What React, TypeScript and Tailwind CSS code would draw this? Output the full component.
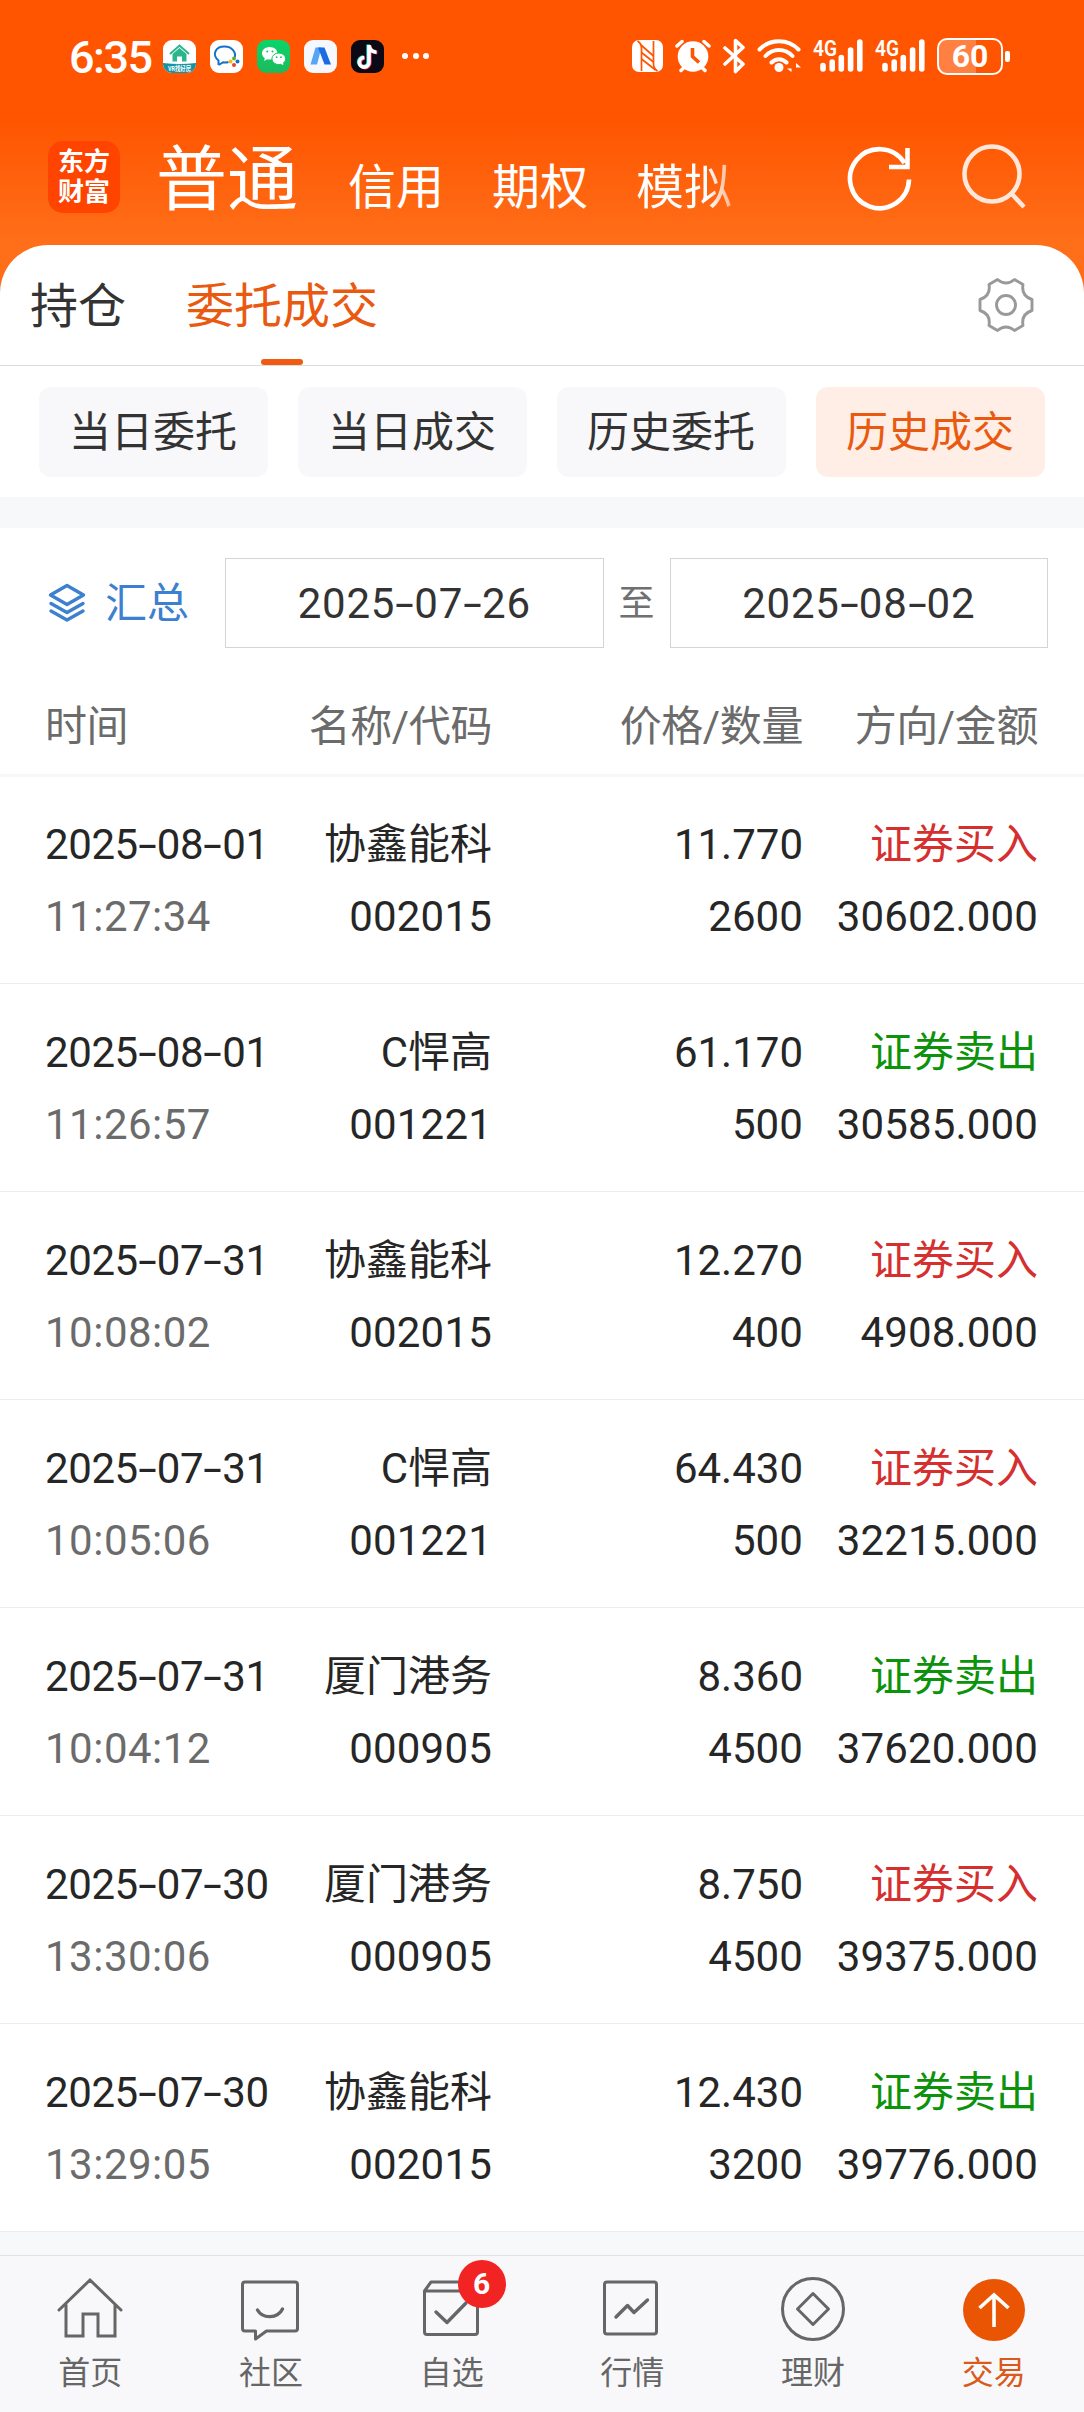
import type { ReactNode } from "react";

interface Trade {
  date: string;
  time: string;
  name: string;
  code: string;
  price: string;
  quantity: string;
  side: "buy" | "sell";
  amount: string;
}

const trades: Trade[] = [
  { date: "2025-08-01", time: "11:27:34", name: "协鑫能科", code: "002015", price: "11.770", quantity: "2600", side: "buy", amount: "30602.000" },
  { date: "2025-08-01", time: "11:26:57", name: "C悍高", code: "001221", price: "61.170", quantity: "500", side: "sell", amount: "30585.000" },
  { date: "2025-07-31", time: "10:08:02", name: "协鑫能科", code: "002015", price: "12.270", quantity: "400", side: "buy", amount: "4908.000" },
  { date: "2025-07-31", time: "10:05:06", name: "C悍高", code: "001221", price: "64.430", quantity: "500", side: "buy", amount: "32215.000" },
  { date: "2025-07-31", time: "10:04:12", name: "厦门港务", code: "000905", price: "8.360", quantity: "4500", side: "sell", amount: "37620.000" },
  { date: "2025-07-30", time: "13:30:06", name: "厦门港务", code: "000905", price: "8.750", quantity: "4500", side: "buy", amount: "39375.000" },
  { date: "2025-07-30", time: "13:29:05", name: "协鑫能科", code: "002015", price: "12.430", quantity: "3200", side: "sell", amount: "39776.000" },
];

const filters = ["当日委托", "当日成交", "历史委托", "历史成交"];

function DateText({ value }: { value: string }) {
  const parts = value.split("-");
  return (
    <span className="whitespace-nowrap">
      {parts.map((part, i) => (
        <span key={i}>
          {i > 0 && <span className="inline-block w-[19px] scale-x-[1.6] text-center tracking-normal">-</span>}
          {part}
        </span>
      ))}
    </span>
  );
}

function AppBadge({ className, children }: { className: string; children: ReactNode }) {
  return (
    <div className={`size-[33px] rounded-[9px] ${className}`}>
      <svg viewBox="0 0 33 33" className="size-full overflow-visible" fill="none">
        {children}
      </svg>
    </div>
  );
}

function SignalIcon() {
  return (
    <svg width="50" height="36" viewBox="0 0 50 36" className="overflow-visible text-white">
      <text x="0" y="17.5" fontSize="21.5" fontWeight="600" textLength="24" lengthAdjust="spacingAndGlyphs" fill="currentColor">
        4G
      </text>
      <g stroke="currentColor" strokeWidth="5.6" strokeLinecap="round">
        <path d="M10 27.5v3.5M19.2 24v7M28.3 19.5v11.5M37.6 12v19M46.8 4v27" />
      </g>
    </svg>
  );
}

function StatusBar() {
  return (
    <div className="flex h-[112px] items-center justify-between pr-[74px] pl-[69px]">
      <div className="flex items-center">
        <span className="w-[94px] pt-[2px] text-[45px] leading-none font-medium tracking-[-1.5px] text-white">6:35</span>
        <div className="flex items-center gap-[14px]">
          <AppBadge className="bg-white">
            <path d="M7 14 16.5 5.500 26 14" stroke="#2bb58a" strokeWidth="2" />
            <path d="M9.500 14 16.500 8l7 6v7.500h-4.500v-5h-5v5H9.500z" fill="#2bb58a" />
            <path d="M0 23q16.500 2 33 0v1a9 9 0 0 1-9 9H9a9 9 0 0 1-9-9z" fill="#1493a3" />
            <text x="5" y="30.800" fontSize="6.500" fontWeight="700" textLength="23" lengthAdjust="spacingAndGlyphs" fill="#fff">VR找好房</text>
          </AppBadge>
          <AppBadge className="bg-white">
            <path d="M8.500 25v-4.500C1.500 14.500 5.500 6.500 14.500 6.500c8 0 12 6.500 10 11.500M8.500 25l5-2.800c1.500.4 3.500.3 5-.2" stroke="#1672c8" strokeWidth="2" strokeLinejoin="round" />
            <circle cx="24" cy="18.500" r="2" fill="#5cb531" />
            <circle cx="27.500" cy="21.500" r="2" fill="#1672c8" />
            <circle cx="24" cy="25" r="2" fill="#e5432d" />
            <circle cx="20.500" cy="21.500" r="2" fill="#f5b914" />
          </AppBadge>
          <AppBadge className="bg-gradient-to-b from-[#06d66a] to-[#1cb95c]">
            <path d="M12.700 7c-4.300 0-7.700 2.800-7.700 6.300 0 2 1.100 3.700 2.800 4.900l-.7 2.700 3.100-1.600c.8.200 1.600.3 2.500.3 4.300 0 7.700-2.800 7.700-6.300s-3.400-6.300-7.700-6.300z" fill="#fff" />
            <ellipse cx="21.800" cy="18.800" rx="6.900" ry="5.800" fill="#fff" stroke="#10c564" strokeWidth="1" />
            <path d="m23.500 23.500 2.800 1.800-.3-3z" fill="#fff" />
            <g fill="#10c564">
              <circle cx="10.200" cy="11.500" r="1" />
              <circle cx="15.500" cy="11.500" r="1" />
              <circle cx="19.600" cy="17.200" r=".9" />
              <circle cx="24" cy="17.200" r=".9" />
            </g>
          </AppBadge>
          <AppBadge className="bg-[#f5f9ff]">
            <path d="M11.500 7.500h6L13 24.500H6.500z" fill="#56a4f5" />
            <path d="M14 7.500h6.500l6.500 17h-6.500z" fill="#1c6be0" />
          </AppBadge>
          <AppBadge className="bg-[#0b0a14]">
            <g fill="none" strokeWidth="3.600">
              <path d="M17.200 4.500v17.300a4.800 4.800 0 1 1-4.800-4.800M17.200 5c.5 4 3.500 6.500 7.500 6.800" stroke="#25e6e0" />
              <path d="M18.800 5.500v17.300a4.800 4.800 0 1 1-4.800-4.800M18.800 6c.5 4 3.500 6.500 7.500 6.800" stroke="#f6335c" />
              <path d="M18 5v17.300a4.800 4.800 0 1 1-4.800-4.800M18 5.500c.5 4 3.500 6.500 7.500 6.800" stroke="#fff" />
            </g>
          </AppBadge>
        </div>
        <div className="ml-[18px] flex gap-[4.5px]">
          <i className="size-[6px] rounded-full bg-white" />
          <i className="size-[6px] rounded-full bg-white" />
          <i className="size-[6px] rounded-full bg-white" />
        </div>
      </div>

      <div className="flex items-center gap-[12px] text-white">
        <svg width="31" height="32" viewBox="0 0 31 32">
          <rect width="31" height="32" rx="7" fill="currentColor" />
          <g fill="none" stroke="#ff5500" strokeWidth="1.700">
            <path d="M5.500 1q4 2.500 4 7v23M25.500 31q-4-2.500-4-7V1" />
            <path d="M9 5 21.500 16M9.500 12.500 21.500 22M9.500 19 23.500 30" />
          </g>
        </svg>
        <svg width="36" height="34" viewBox="0 0 36 34">
          <g stroke="currentColor" strokeWidth="3.500" strokeLinecap="round" fill="none">
            <path d="M2 7 7 2.500M34 7 29 2.500M6 31.500l4-4M30 31.500l-4-4" />
          </g>
          <circle cx="18" cy="17.500" r="15.300" fill="currentColor" />
          <path d="M17.500 9v8.500l6.500 6" stroke="#ff5500" strokeWidth="3.600" fill="none" />
        </svg>
        <svg width="22" height="36" viewBox="0 0 22 36" fill="none" stroke="currentColor" strokeWidth="3.600" strokeLinecap="round" strokeLinejoin="round">
          <path d="M2 10l18 16-7.500 7.500v-31L20 9.500 2 26" />
        </svg>
        <svg width="44" height="36" viewBox="0 0 44 36" fill="none" stroke="currentColor" strokeWidth="4" strokeLinecap="round">
          <path d="M2.500 11.500c10.500-11 28.500-11 39 0M8.500 18c7.500-8 19.500-8 27 0M14.500 24.500c4.500-4.500 10.500-4.500 15 0" />
          <circle cx="22" cy="29.500" r="4.500" fill="currentColor" stroke="none" />
          <path d="M34.500 25v9l-4.500-3.500h4.500M39 34v-9l5 4.500h-5" fill="currentColor" stroke="none" />
        </svg>
        <SignalIcon />
        <SignalIcon />
        <div className="flex items-center gap-[2px]">
          <div className="flex h-[37px] w-[66px] items-center justify-center rounded-[10px] border-2 border-white bg-[linear-gradient(90deg,#ff8040_59%,transparent_59%)] text-[32px] leading-none font-bold">
            60
          </div>
          <i className="h-[11px] w-[5px] rounded-[2px] bg-white" />
        </div>
      </div>
    </div>
  );
}

function AccountHeader() {
  return (
    <div className="flex h-[133px] items-start pl-[48px] text-white">
      <div className="mt-[29px] flex size-[72px] flex-col items-center justify-center rounded-[15px] bg-[#ff4400] text-[26px] leading-[30px] font-bold">
        <span>东方</span>
        <span>财富</span>
      </div>
      <div className="flex w-[690px] items-baseline pl-[36px]">
        <span className="mt-[18px] text-[71px] leading-[100px]">普通</span>
        <span className="ml-[50px] text-[48px]">信用</span>
        <span className="ml-[48px] text-[48px]">期权</span>
        <span className="ml-[48px] bg-gradient-to-r from-white from-75% to-white/50 bg-clip-text text-[48px] text-transparent">模拟</span>
      </div>
      <svg className="mt-[33px] ml-[37px]" width="66" height="66" viewBox="0 0 66 66" fill="none" stroke="currentColor" strokeWidth="4.600">
        <path d="M62 34.500A29.500 29.500 0 1 1 57.500 18" />
        <path d="M60.500 3v19H42" />
      </svg>
      <svg className="mt-[31px] ml-[48px] opacity-85" width="66" height="66" viewBox="0 0 66 66" fill="none" stroke="currentColor" strokeWidth="4.600">
        <circle cx="31" cy="31" r="27.500" />
        <path d="M50 50 63 64" />
      </svg>
    </div>
  );
}

function GearIcon() {
  return (
    <svg width="56" height="56" viewBox="0 0 56 56" fill="none" stroke="#999" strokeWidth="2.900" strokeLinejoin="round">
      <path d="M19.500 2.500q8.500 7 17 0l8.500 5q-2 11.500 9 15v11q-11 3.500-9 15l-8.500 5q-8.500-7-17 0l-8.500-5q2-11.500-9-15v-11q11-3.500 9-15z" />
      <circle cx="28" cy="28" r="9.500" />
    </svg>
  );
}

function TradeRow({ trade }: { trade: Trade }) {
  const isBuy = trade.side === "buy";
  return (
    <div className="grid h-[208px] grid-cols-[240px_207px_311px_235px] content-start border-b border-[#ececec] pt-[33px] pl-[45px] text-[42px] leading-[72px] text-[#262626]">
      <span className="tracking-[-0.4px]">
        <DateText value={trade.date} />
      </span>
      <span className="text-right">{trade.name}</span>
      <span className="text-right">{trade.price}</span>
      <span className={isBuy ? "text-right text-[#d62f2f]" : "text-right text-[#0b930b]"}>{isBuy ? "证券买入" : "证券卖出"}</span>
      <span className="tracking-[0.5px] text-[#6b6b6b]">{trade.time}</span>
      <span className="text-right tracking-[0.2px]">{trade.code}</span>
      <span className="text-right tracking-[0.1px]">{trade.quantity}</span>
      <span className="text-right tracking-[0.15px]">{trade.amount}</span>
    </div>
  );
}

function NavItem({ label, active, badge, children }: { label: string; active?: boolean; badge?: string; children: ReactNode }) {
  return (
    <div className={`flex flex-1 flex-col items-center pt-[19px] ${active ? "text-[#d95a1a]" : "text-[#666]"}`}>
      <div className="relative size-[68px]">
        <svg viewBox="0 0 68 68" className="size-full" fill="none" stroke="currentColor" strokeWidth="3" strokeLinejoin="round" strokeLinecap="round">
          {children}
        </svg>
        {badge && (
          <span className="absolute -top-[15px] left-[40px] flex size-[48px] items-center justify-center rounded-full bg-[#f22323] text-[30px] leading-none font-bold text-white">
            {badge}
          </span>
        )}
      </div>
      <span className="mt-[8px] text-[32px] leading-[44px]">{label}</span>
    </div>
  );
}

export default function App() {
  return (
    <div className="flex h-[2412px] w-[1084px] flex-col overflow-hidden bg-[linear-gradient(180deg,#ff5500_0px,#ff5500_120px,#ff6f1a_245px,#ff6a14_300px)] font-[Roboto,'Noto_Sans_CJK_SC',sans-serif]">
      <StatusBar />
      <AccountHeader />

      <main className="flex flex-1 flex-col rounded-t-[48px] bg-white">
        <div className="flex h-[121px] items-center border-b border-[#dcdcdc] pl-[30px] text-[48px] text-[#333]">
          <span className="pt-[3px]">持仓</span>
          <div className="relative ml-[60px] flex h-full items-center pt-[3px] text-[#e95a10]">
            委托成交
            <i className="absolute bottom-0 left-[75px] h-[6px] w-[42px] rounded-full bg-[#f05a12]" />
          </div>
          <div className="mr-[50px] ml-auto">
            <GearIcon />
          </div>
        </div>

        <div className="flex gap-[30px] px-[39px] pt-[21px] pb-5 text-[42px]">
          {filters.map((label, i) => (
            <button
              key={label}
              className={
                i === 3
                  ? "h-[90px] flex-1 rounded-xl bg-[#ffeee6] pr-px text-[#e95a10]"
                  : "h-[90px] flex-1 rounded-xl bg-[#f8f8fa] pr-px text-[#333]"
              }
            >
              {label}
            </button>
          ))}
        </div>

        <div className="h-[31px] bg-[#f6f8fa]" />

        <div className="flex items-center pt-[30px] pr-[36px] pl-[48px] text-[42px] text-[#333]">
          <svg width="38" height="40" viewBox="0 0 38 40" fill="none" stroke="#3d80d0" strokeWidth="3.400" strokeLinejoin="round" strokeLinecap="round">
            <path d="M19 2.500 35.500 12 19 21.500 2.500 12z" />
            <path d="M3 20.500 19 29.500l16-9M3 28 19 37l16-9" />
          </svg>
          <span className="ml-[19px] pt-px text-[#3d80d0]">汇总</span>
          <div className="ml-[36px] flex h-[90px] flex-1 items-center justify-center border border-[#d4d4d4] pt-px tracking-[0.8px]">
            <DateText value="2025-07-26" />
          </div>
          <span className="w-[66px] pt-px text-center text-[36px] text-[#707070]">至</span>
          <div className="flex h-[90px] flex-1 items-center justify-center border border-[#d4d4d4] pt-px tracking-[0.8px]">
            <DateText value="2025-08-02" />
          </div>
        </div>

        <div className="grid h-[129px] grid-cols-[240px_207px_311px_235px] items-center border-b-[3px] border-[#f7f7f8] pt-[32px] pl-[45px] text-[42px] leading-none tracking-[-0.4px] text-[#6b6b6b]">
          <span>时间</span>
          <span className="text-right">名称/代码</span>
          <span className="text-right">价格/数量</span>
          <span className="text-right">方向/金额</span>
        </div>

        <div className="-mt-px">
          {trades.map((trade) => (
            <TradeRow key={trade.date + trade.time} trade={trade} />
          ))}
        </div>

        <div className="flex-1 bg-[#f7f8fa]" />
      </main>

      <nav className="flex h-[157px] border-t border-[#e2e2e4] bg-[#f8f8fa]">
        <NavItem label="首页">
          <path d="M3 35 34 5l31 30M10 30v31h17V39h15v22h17V30" strokeLinejoin="miter" />
        </NavItem>
        <NavItem label="社区">
          <path d="M8 7h50q2.500 0 2.500 2.500v44q0 2.500-2.500 2.500H29.500L18.500 64v-8H8q-2.500 0-2.500-2.500v-44Q5.500 7 8 7z" />
          <path d="M20.500 35c5 9 20 9 25-1" strokeWidth="3.400" />
        </NavItem>
        <NavItem label="自选" badge="6">
          <path d="M6.500 16 13 7h40l6.500 9v41q0 2.500-2.500 2.500H9q-2.500 0-2.500-2.500zh53" />
          <path d="m18 37 11 10.500L48 28" strokeWidth="3.400" />
        </NavItem>
        <NavItem label="行情">
          <rect x="6.500" y="7" width="52" height="52" rx="2.500" />
          <path d="m18 42 11.500-11.500 6.500 7L49.500 25" strokeWidth="3.400" />
        </NavItem>
        <NavItem label="理财">
          <circle cx="34" cy="34" r="30.500" />
          <path d="M34 18.500 49.500 34 34 49.500 18.500 34z" />
        </NavItem>
        <NavItem label="交易" active>
          <circle cx="34" cy="35" r="31" fill="#ea5504" stroke="none" />
          <path d="M34 52V20M19.500 33 34 20l14.500 13" stroke="#fff" strokeWidth="3.600" strokeLinecap="butt" strokeLinejoin="miter" />
        </NavItem>
      </nav>
    </div>
  );
}
